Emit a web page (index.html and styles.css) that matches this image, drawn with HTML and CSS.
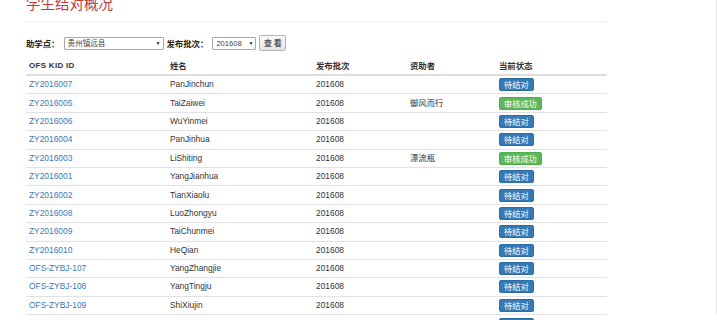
FILE: index.html
```html
<!DOCTYPE html>
<html lang="zh-CN">
<head>
    <meta charset="UTF-8">
    <title>学生结对概况</title>
    <link rel="stylesheet" href="styles.css">
</head>
<body>
<div class="page">
    <div class="main">
        <h1 class="pageTitle">学生结对概况</h1>

        <form class="filter">
            <label class="filterLabel">助学点：</label>
            <span class="fakeSelect width100">贵州镇远县<i class="arrow">&#9660;</i></span>
            <label class="filterLabel">发布批次：</label>
            <span class="fakeSelect width44">201608<i class="arrow">&#9660;</i></span>
            <button type="button" class="btnSearch">查&nbsp;看</button>
        </form>

        <table class="kidTable">
            <thead>
            <tr>
                <th class="colId">OFS KID ID</th>
                <th class="colName">姓名</th>
                <th class="colBatch">发布批次</th>
                <th class="colDonor">资助者</th>
                <th>当前状态</th>
            </tr>
            </thead>
            <tbody>
            <tr><td><a href="#">ZY2016007</a></td><td>PanJinchun</td><td>201608</td><td></td><td><span class="tag tagWait">待结对</span></td></tr>
            <tr><td><a href="#">ZY2016005</a></td><td>TaiZaiwei</td><td>201608</td><td>御风而行</td><td><span class="tag tagOk">审核成功</span></td></tr>
            <tr><td><a href="#">ZY2016006</a></td><td>WuYinmei</td><td>201608</td><td></td><td><span class="tag tagWait">待结对</span></td></tr>
            <tr><td><a href="#">ZY2016004</a></td><td>PanJinhua</td><td>201608</td><td></td><td><span class="tag tagWait">待结对</span></td></tr>
            <tr><td><a href="#">ZY2016003</a></td><td>LiShiting</td><td>201608</td><td>漂流瓶</td><td><span class="tag tagOk">审核成功</span></td></tr>
            <tr><td><a href="#">ZY2016001</a></td><td>YangJianhua</td><td>201608</td><td></td><td><span class="tag tagWait">待结对</span></td></tr>
            <tr><td><a href="#">ZY2016002</a></td><td>TianXiaolu</td><td>201608</td><td></td><td><span class="tag tagWait">待结对</span></td></tr>
            <tr><td><a href="#">ZY2016008</a></td><td>LuoZhongyu</td><td>201608</td><td></td><td><span class="tag tagWait">待结对</span></td></tr>
            <tr><td><a href="#">ZY2016009</a></td><td>TaiChunmei</td><td>201608</td><td></td><td><span class="tag tagWait">待结对</span></td></tr>
            <tr><td><a href="#">ZY2016010</a></td><td>HeQian</td><td>201608</td><td></td><td><span class="tag tagWait">待结对</span></td></tr>
            <tr><td><a href="#">OFS-ZYBJ-107</a></td><td>YangZhangjie</td><td>201608</td><td></td><td><span class="tag tagWait">待结对</span></td></tr>
            <tr><td><a href="#">OFS-ZYBJ-108</a></td><td>YangTingju</td><td>201608</td><td></td><td><span class="tag tagWait">待结对</span></td></tr>
            <tr><td><a href="#">OFS-ZYBJ-109</a></td><td>ShiXiujin</td><td>201608</td><td></td><td><span class="tag tagWait">待结对</span></td></tr>
            <tr><td><a href="#">OFS-ZYBJ-110</a></td><td>SunTianyu</td><td>201608</td><td></td><td><span class="tag tagWait">待结对</span></td></tr>
            </tbody>
        </table>
    </div>
</div>
</body>
</html>
```

FILE: styles.css
```css
* {
    margin: 0;
    padding: 0;
    box-sizing: border-box;
}

html, body {
    height: 100%;
    overflow: hidden;
}

body {
    font: 8.4px/12px "Liberation Sans", "Noto Sans CJK SC", sans-serif;
    color: #333;
    background: #fff;
}

a {
    color: #337ab7;
    text-decoration: none;
}

.page {
    width: 717px;
    height: 100%;
    border-right: 1px solid #e3e3e3;
}

.main {
    width: 607px;
    padding-left: 26px;
}

.pageTitle {
    margin-top: -6px;
    padding-bottom: 10px;
    border-bottom: 1px solid #eee;
    font: normal 14.5px/17px "Noto Sans CJK SC", sans-serif;
    color: #bd3b3b;
}

.filter {
    display: flex;
    align-items: center;
    margin-top: 13px;
    height: 16px;
}

.filterLabel {
    font: bold 8.4px/12px "Noto Sans CJK SC", sans-serif;
    color: #222;
    margin-right: 4px;
}

.fakeSelect {
    position: relative;
    display: inline-block;
    height: 13px;
    padding-left: 3px;
    border: 1px solid #a9a9a9;
    border-radius: 1px;
    background: #fff;
    font: 7.6px/11px "Liberation Sans", "Noto Sans CJK SC", sans-serif;
    color: #444;
    margin-right: 3px;
}

.arrow {
    position: absolute;
    right: 2px;
    top: 0;
    font-style: normal;
    font-size: 5px;
    line-height: 11px;
    color: #222;
}

.width100 {
    width: 100px;
}

.width44 {
    width: 44px;
}

.btnSearch {
    width: 27px;
    height: 16px;
    border: 1px solid #b5b5b5;
    border-radius: 2px;
    background: linear-gradient(#fafafa, #e3e3e3);
    font: bold 8px/14px "Noto Sans CJK SC", sans-serif;
    color: #555;
}

.kidTable {
    width: 581px;
    margin-top: 6px;
    border-collapse: collapse;
    table-layout: fixed;
}

.kidTable th {
    text-align: left;
    padding: 3px 3px 2px;
    line-height: 12px;
    font-weight: bold;
    color: #333;
    border-bottom: 2px solid #ddd;
}

.kidTable th:first-child {
    font-size: 8px;
    letter-spacing: 0.3px;
}

.kidTable td {
    height: 18.4px;
    padding: 2.2px 3px;
    line-height: 13px;
    border-top: 1px solid #e2e2e2;
    vertical-align: middle;
    white-space: nowrap;
}

.colId {
    width: 141px;
}

.colName {
    width: 146px;
}

.colBatch {
    width: 94px;
}

.colDonor {
    width: 89px;
}

.tag {
    display: inline-block;
    vertical-align: top;
    height: 13px;
    padding: 0 4px;
    border: 1px solid;
    border-radius: 2px;
    color: #fff;
    font: 8.2px/11px "Noto Sans CJK SC", sans-serif;
}

.tagWait {
    background: #337ab7;
    border-color: #2e6da4;
}

.tagOk {
    background: #5cb85c;
    border-color: #4cae4c;
}
```
